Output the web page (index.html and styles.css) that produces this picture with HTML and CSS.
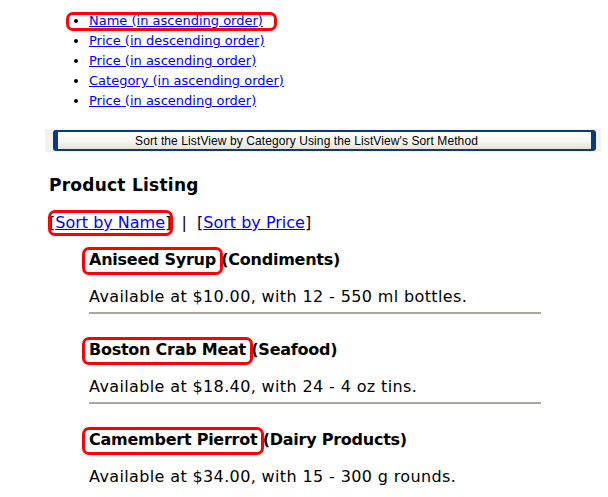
FILE: index.html
```html
<!DOCTYPE html>
<html lang="en">
<head>
    <meta charset="UTF-8">
    <meta name="viewport" content="width=device-width, initial-scale=1.0">
    <title>Sorting Products</title>
    <link rel="stylesheet" href="styles.css">
</head>
<body>
    <ul class="sort-options">
        <li><a href="#" class="marked marked-option">Name (in ascending order)</a></li>
        <li><a href="#">Price (in descending order)</a></li>
        <li><a href="#">Price (in ascending order)</a></li>
        <li><a href="#">Category (in ascending order)</a></li>
        <li><a href="#">Price (in ascending order)</a></li>
    </ul>

    <div class="toolbar">
        <button class="sort-btn">Sort the ListView by Category Using the ListView's Sort Method</button>
    </div>

    <h3 class="listing-title">Product Listing</h3>

    <p class="sort-links">
        <span class="marked marked-sort">[<a href="#">Sort by Name</a>]</span>
        &nbsp;|&nbsp; [<a href="#">Sort by Price</a>]
    </p>

    <div class="products">
        <div class="product">
            <h4><span class="marked marked-name">Aniseed Syrup</span> (Condiments)</h4>
            <p>Available at $10.00, with 12 - 550 ml bottles.</p>
            <hr>
        </div>
        <div class="product">
            <h4><span class="marked marked-name">Boston Crab Meat</span> (Seafood)</h4>
            <p>Available at $18.40, with 24 - 4 oz tins.</p>
            <hr>
        </div>
        <div class="product">
            <h4><span class="marked marked-name">Camembert Pierrot</span> (Dairy Products)</h4>
            <p>Available at $34.00, with 15 - 300 g rounds.</p>
        </div>
    </div>
</body>
</html>
```

FILE: styles.css
```css
body {
    font-family: "DejaVu Sans", Verdana, sans-serif;
    margin: 0;
    padding: 0 9px 0 49px;
    background-color: #fff;
    color: #000;
}

a {
    color: #0000ff;
}

.sort-options {
    margin: 11px 0 0;
    padding-left: 40px;
    font-size: 13px;
    line-height: 20px;
}

/* red callouts drawn over the screenshot */
.marked {
    position: relative;
}

.marked::after {
    content: "";
    position: absolute;
    border: 3px solid #f00;
    border-radius: 7px;
    pointer-events: none;
}

.marked-option::after {
    top: -1px;
    bottom: -3px;
    left: -23px;
    right: -14px;
}

.marked-sort::after {
    top: -3px;
    bottom: -4px;
    left: -1px;
    right: -2px;
}

.marked-name::after {
    top: -3px;
    bottom: -6px;
    left: -7px;
    right: -7px;
}

.toolbar {
    margin: 18px -2px 0 -4px;
    padding: 1px 5px 1px 8px;
    background-color: #f3f2ed;
}

.sort-btn {
    display: block;
    width: 100%;
    height: 21px;
    padding: 0 36px 0 0;
    font-family: "Liberation Sans", Arial, sans-serif;
    font-size: 12px;
    letter-spacing: 0.1px;
    color: #000;
    background: linear-gradient(#ffffff, #f6f5f0 55%, #e4e2d6);
    border: 2px solid #0a3a78;
    border-left-width: 5px;
    border-right-width: 5px;
    border-radius: 3px;
}

.listing-title {
    margin: 23px 0 0;
    font-size: 17px;
    line-height: 20px;
    letter-spacing: 0.25px;
}

.sort-links {
    margin: 18px 0 0;
    font-size: 16px;
    line-height: 20px;
}

.products {
    margin-top: 17px;
    padding-left: 40px;
}

.product h4 {
    margin: 0;
    font-size: 16px;
    line-height: 20px;
    letter-spacing: -0.25px;
}

.product p {
    margin: 17px 0 0;
    font-size: 16px;
    line-height: 20px;
    letter-spacing: 0.37px;
}

.product hr {
    width: 452px;
    margin: 5px 0 26px;
    border: none;
    border-top: 2px solid #aca899;
}
```
